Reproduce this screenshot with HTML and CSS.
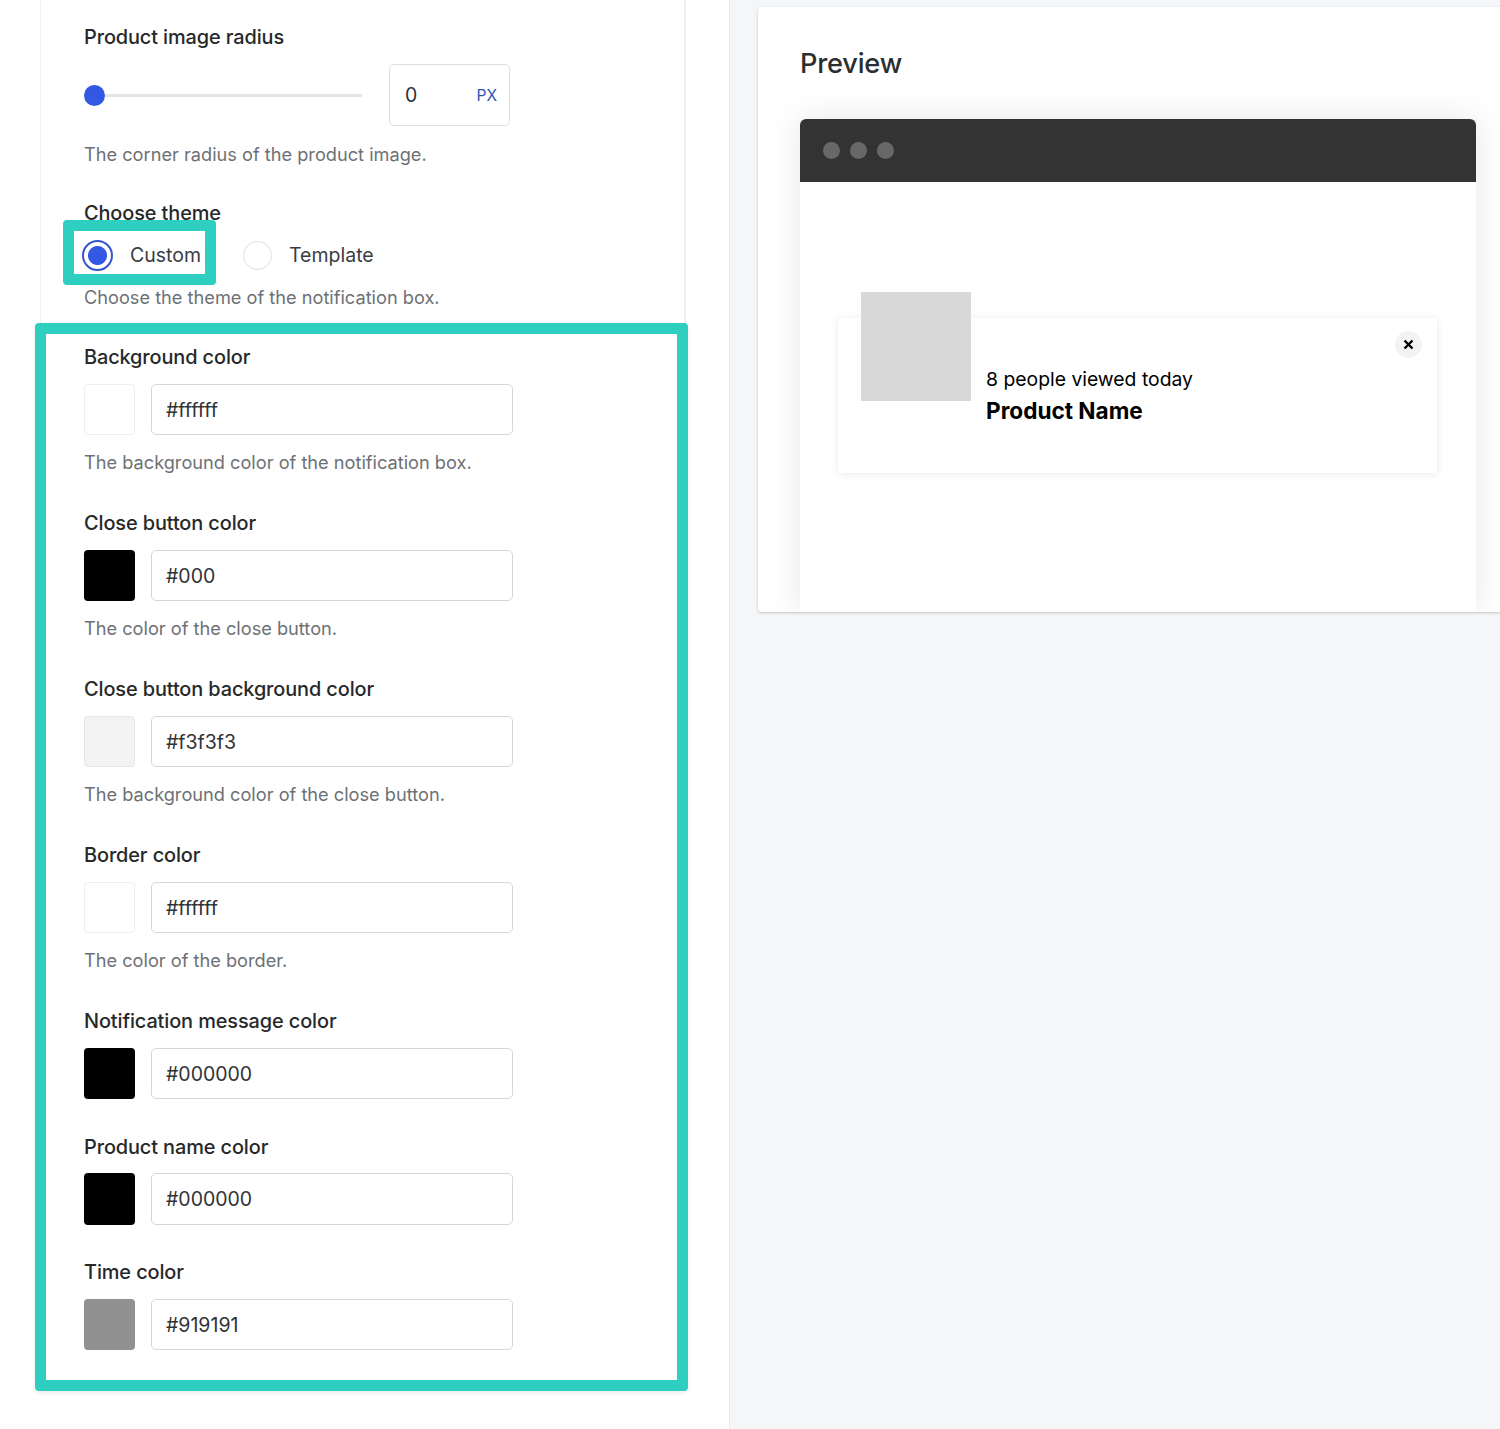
FILE: index.html
```html
<!DOCTYPE html>
<html lang="en">
<head>
<meta charset="utf-8">
<title>Notification settings</title>
<link rel="stylesheet" href="styles.css">
</head>
<body>
<div class="page">
  <main class="left">
    <section class="card">
      <div class="field">
        <div class="label">Product image radius</div>
        <div class="slider-row">
          <div class="slider"><span class="thumb"></span><span class="track"></span></div>
          <div class="num-box"><span>0</span><span class="unit">PX</span></div>
        </div>
        <div class="hint hint-radius">The corner radius of the product image.</div>
      </div>
      <div class="field field-theme">
        <div class="label">Choose theme</div>
        <div class="radios">
          <div class="radio-item"><span class="radio radio-on"></span><span>Custom</span></div>
          <div class="radio-item"><span class="radio"></span><span>Template</span></div>
        </div>
        <div class="hint">Choose the theme of the notification box.</div>
      </div>
      <div class="field">
        <div class="label">Background color</div>
        <div class="color-row"><span class="swatch swatch-white"></span><div class="text-box">#ffffff</div></div>
        <div class="hint">The background color of the notification box.</div>
      </div>
      <div class="field">
        <div class="label">Close button color</div>
        <div class="color-row"><span class="swatch swatch-black"></span><div class="text-box">#000</div></div>
        <div class="hint">The color of the close button.</div>
      </div>
      <div class="field">
        <div class="label">Close button background color</div>
        <div class="color-row"><span class="swatch swatch-light"></span><div class="text-box">#f3f3f3</div></div>
        <div class="hint">The background color of the close button.</div>
      </div>
      <div class="field">
        <div class="label">Border color</div>
        <div class="color-row"><span class="swatch swatch-white"></span><div class="text-box">#ffffff</div></div>
        <div class="hint">The color of the border.</div>
      </div>
      <div class="field">
        <div class="label">Notification message color</div>
        <div class="color-row"><span class="swatch swatch-black"></span><div class="text-box">#000000</div></div>
      </div>
      <div class="field field-tight">
        <div class="label">Product name color</div>
        <div class="color-row"><span class="swatch swatch-black"></span><div class="text-box">#000000</div></div>
      </div>
      <div class="field field-last">
        <div class="label">Time color</div>
        <div class="color-row"><span class="swatch swatch-gray"></span><div class="text-box">#919191</div></div>
      </div>
    </section>
    <div class="mark mark-small"></div>
    <div class="mark mark-large"></div>
  </main>
  <aside class="right">
    <section class="panel">
      <h2 class="title">Preview</h2>
      <div class="window">
        <div class="window-bar"><span class="dot"></span><span class="dot"></span><span class="dot"></span></div>
        <div class="window-body">
          <div class="notice">
            <div class="notice-image"></div>
            <div class="notice-text">
              <div class="notice-msg">8 people viewed today</div>
              <div class="notice-name">Product Name</div>
            </div>
            <div class="notice-close">
              <svg width="11" height="11" viewBox="0 0 11 11"><path d="M1.5 1.5l8 8M9.5 1.5l-8 8" stroke="#000" stroke-width="2.4" fill="none"/></svg>
            </div>
          </div>
        </div>
      </div>
    </section>
  </aside>
</div>
</body>
</html>
```
FILE: styles.css
```css
* { box-sizing: border-box; }
html, body { margin: 0; padding: 0; }
body { font-family: Inter, "Liberation Sans", sans-serif; color: #202223; background: #f5f6f8; }
.page { display: flex; height: 1429px; overflow: hidden; }

.left { position: relative; width: 730px; flex: none; background: #fff; border-right: 1px solid #e6e8ea; padding-left: 40px; }
.card { width: 646px; padding: 23px 0 7px 43px; border-left: 1px solid #eef0f1; border-right: 2px solid #eef0f1; }

.field { margin-bottom: 34px; }
.field-theme { margin-top: -2px; margin-bottom: 33px; }
.field-tight { margin-bottom: 33px; }
.field-tight .color-row { height: 52px; }
.field-tight .swatch { height: 52px; }
.field-tight .label { margin-bottom: 12px; }
.label { font-size: 19.9px; font-weight: 500; line-height: 28px; margin-bottom: 13px; letter-spacing: -0.1px; color: #26282a; }
.hint { font-size: 18.2px; line-height: 26px; margin-top: 14px; color: #6d7175; }
.hint-radius { margin-top: 15px; }

.slider-row { display: flex; align-items: center; height: 62px; }
.slider { display: flex; align-items: center; width: 278px; margin-right: 27px; }
.thumb { width: 21px; height: 21px; border-radius: 50%; background: #3358e4; flex: none; }
.track { flex: 1; height: 3px; background: #e4e5e7; }
.num-box { display: flex; justify-content: space-between; align-items: center; width: 121px; height: 62px; padding: 0 12px 0 15px; border: 1px solid #dcdee0; border-radius: 5px; font-size: 19.5px; color: #303234; }
.unit { font-size: 15.5px; color: #2c55b5; }

.radios { display: flex; align-items: center; gap: 42px; height: 30px; font-size: 19.5px; }
.radio-item { display: flex; align-items: center; gap: 17px; color: #3a3d40; }
.radio { width: 29px; height: 29px; border-radius: 50%; border: 1px solid #dcdee0; background: #fff; flex: none; }
.radio-on { width: 31px; height: 31px; margin-left: -2px; border: 2px solid #3555d0; background: radial-gradient(circle, #3358e4 0, #3358e4 9px, #fff 10px); }

.color-row { display: flex; gap: 15px; height: 51px; }
.swatch { width: 51px; height: 51px; border-radius: 4px; flex: none; }
.swatch-white { background: #fff; border: 1px solid #eceef0; }
.swatch-black { background: #000; }
.swatch-light { background: #f3f3f3; border: 1px solid #e6e6e6; }
.swatch-gray { background: #919191; }
.text-box { width: 362px; margin-left: 1px; padding-left: 14px; border: 1px solid #d4d6d8; border-radius: 5px; font-size: 19.5px; line-height: 50px; color: #303234; }

.mark { position: absolute; border-style: solid; border-color: #2ecfc0; border-radius: 4px; }
.mark-small { left: 63px; top: 220px; width: 153px; height: 65px; border-width: 11px; }
.mark-large { left: 35px; top: 323px; width: 653px; height: 1068px; border-width: 11px; box-shadow: 0 2px 4px rgba(0,0,0,.08); }

.right { flex: 1; padding: 7px 0 0 28px; }
.panel { height: 605px; padding: 0 24px 0 42px; background: #fff; border-radius: 4px 0 0 4px; box-shadow: 0 1px 3px rgba(0,0,0,.2); overflow: hidden; }
.title { margin: 0; font-size: 27.2px; font-weight: 500; line-height: 36px; padding-top: 39px; height: 112px; color: #2b2d2f; letter-spacing: -0.2px; }
.window { height: 493px; border-radius: 6px 6px 0 0; background: #fff; box-shadow: 0 0 34px rgba(0,0,0,.1); }
.window-bar { display: flex; align-items: center; gap: 10px; height: 63px; padding-left: 23px; background: #333; border-radius: 6px 6px 0 0; }
.dot { width: 17px; height: 17px; border-radius: 50%; background: #686868; }
.window-body { padding: 136px 0 0 38px; }
.notice { position: relative; display: flex; width: 599px; height: 155px; padding-left: 23px; background: #fff; box-shadow: 0 1px 8px rgba(0,0,0,.09); }
.notice-image { width: 110px; height: 109px; margin-top: -26px; background: #d8d8d8; flex: none; }
.notice-text { margin: 47px 0 0 15px; color: #000; }
.notice-msg { font-size: 19.35px; line-height: 29px; }
.notice-name { font-size: 22.6px; font-weight: 700; line-height: 34px; }
.notice-close { position: absolute; top: 13px; right: 15px; display: flex; align-items: center; justify-content: center; width: 27px; height: 27px; border-radius: 50%; background: #f3f3f3; }
```
